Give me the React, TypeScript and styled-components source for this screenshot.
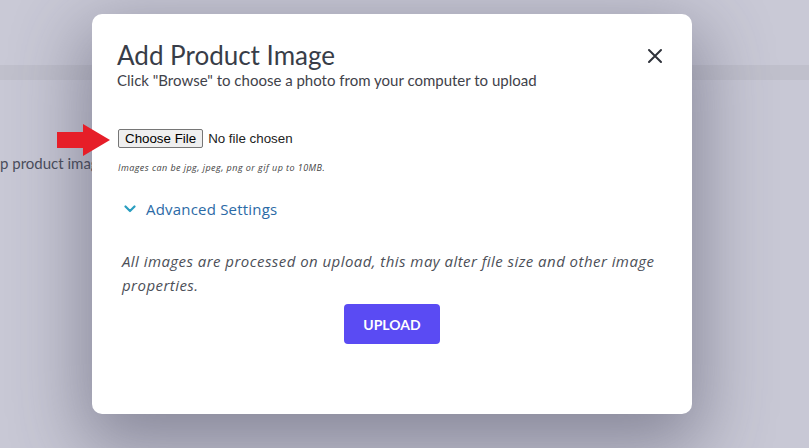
import styled, { createGlobalStyle } from 'styled-components';

const GlobalStyle = createGlobalStyle`
  html, body {
    margin: 0;
    padding: 0;
    width: 809px;
    height: 448px;
    overflow: hidden;
    background: #c8c8d5;
    font-family: Lato, "Liberation Sans", sans-serif;
  }
`;

const Page = styled.div`
  position: relative;
  width: 809px;
  height: 448px;
  background: #c8c8d5;
  display: flex;
  flex-direction: column;
`;

const TopBar = styled.div`
  height: 65px;
  background: #c9c9d6;
`;

const Band = styled.div`
  height: 15px;
  background: #c0c0cc;
`;

const PageBody = styled.div`
  padding: 74px 0 0 0;
  font-size: 15px;
  color: #4b4e5c;
  white-space: nowrap;
`;

const Modal = styled.div`
  position: absolute;
  left: 92px;
  top: 14px;
  width: 600px;
  height: 400px;
  box-sizing: border-box;
  background: #fff;
  border-radius: 10px;
  box-shadow: 0 24px 70px 10px rgba(60, 60, 85, 0.45);
  padding: 26px 25px 0 25px;
  display: flex;
  flex-direction: column;
`;

const Header = styled.div`
  display: flex;
  justify-content: space-between;
  align-items: flex-start;
`;

const Title = styled.h2`
  margin: 0;
  font-size: 26px;
  font-weight: 400;
  line-height: 31px;
  color: #383d48;
`;

const Subtitle = styled.p`
  margin: 0;
  font-size: 15px;
  line-height: 18px;
  color: #3f424a;
`;

const CloseButton = styled.button`
  border: none;
  background: none;
  padding: 0;
  margin: 8px 2px 0 0;
  width: 18px;
  height: 18px;
  cursor: pointer;
  display: flex;
`;

const FileRow = styled.div`
  margin-top: 40px;
  display: flex;
  align-items: center;
  gap: 5px;
  font-family: "Liberation Sans", Arial, sans-serif;
  font-size: 13.33px;
  color: #222;
`;

const FileButton = styled.label`
  display: inline-block;
  box-sizing: border-box;
  height: 19px;
  line-height: 15px;
  padding: 1px 6px;
  border: 1px solid #767676;
  border-radius: 2px;
  background: #efefef;
  color: #000;
  margin-left: 1px;
`;

const Hint = styled.p`
  margin: 13px 0 0 1px;
  font-family: "Open Sans", Lato, sans-serif;
  font-size: 9px;
  font-style: italic;
  letter-spacing: 0.45px;
  color: #444;
`;

const Advanced = styled.div`
  margin: 25px 0 0 7px;
  display: flex;
  align-items: center;
  gap: 10px;
  font-family: "Open Sans", Lato, sans-serif;
  font-size: 15px;
  letter-spacing: 0.2px;
  color: #2b6aa6;
`;

const Note = styled.p`
  margin: 30px 0 0 5px;
  font-family: "Open Sans", Lato, sans-serif;
  font-size: 15px;
  font-style: italic;
  line-height: 24px;
  letter-spacing: 0.45px;
  color: #4c4f58;
`;

const UploadButton = styled.button`
  align-self: center;
  margin-top: 7px;
  width: 96px;
  height: 40px;
  border: none;
  border-radius: 4px;
  background: #5a4bf3;
  color: #fff;
  font-family: Lato, "Liberation Sans", sans-serif;
  font-weight: 700;
  font-size: 14px;
  cursor: pointer;
`;

const Arrow = styled.svg`
  position: absolute;
  left: 55px;
  top: 123px;
`;

const App = () => (
  <>
    <GlobalStyle />
    <Page>
      <TopBar />
      <Band />
      <PageBody>p product images</PageBody>
      <Modal>
        <Header>
          <div>
            <Title>Add Product Image</Title>
            <Subtitle>Click "Browse" to choose a photo from your computer to upload</Subtitle>
          </div>
          <CloseButton aria-label="Close">
            <svg width="16" height="16" viewBox="0 0 16 16">
              <path d="M2 2 L14 14 M14 2 L2 14" stroke="#2f323a" strokeWidth="2" strokeLinecap="round" />
            </svg>
          </CloseButton>
        </Header>
        <FileRow>
          <FileButton>Choose File</FileButton>
          <span>No file chosen</span>
        </FileRow>
        <Hint>Images can be jpg, jpeg, png or gif up to 10MB.</Hint>
        <Advanced>
          <svg width="12" height="8" viewBox="0 0 12 8">
            <path d="M1.5 1.5 L6 6 L10.5 1.5" stroke="#2a9ec0" strokeWidth="2.2" fill="none" strokeLinecap="round" strokeLinejoin="round" />
          </svg>
          <span>Advanced Settings</span>
        </Advanced>
        <Note>
          All images are processed on upload, this may alter file size and other image properties.
        </Note>
        <UploadButton>UPLOAD</UploadButton>
      </Modal>
      <Arrow width="56" height="34" viewBox="0 0 56 34">
        <polygon points="2,9 28,9 28,1 55,17 28,33 28,25 2,25" fill="#e61e28" />
      </Arrow>
    </Page>
  </>
);

export default App;
